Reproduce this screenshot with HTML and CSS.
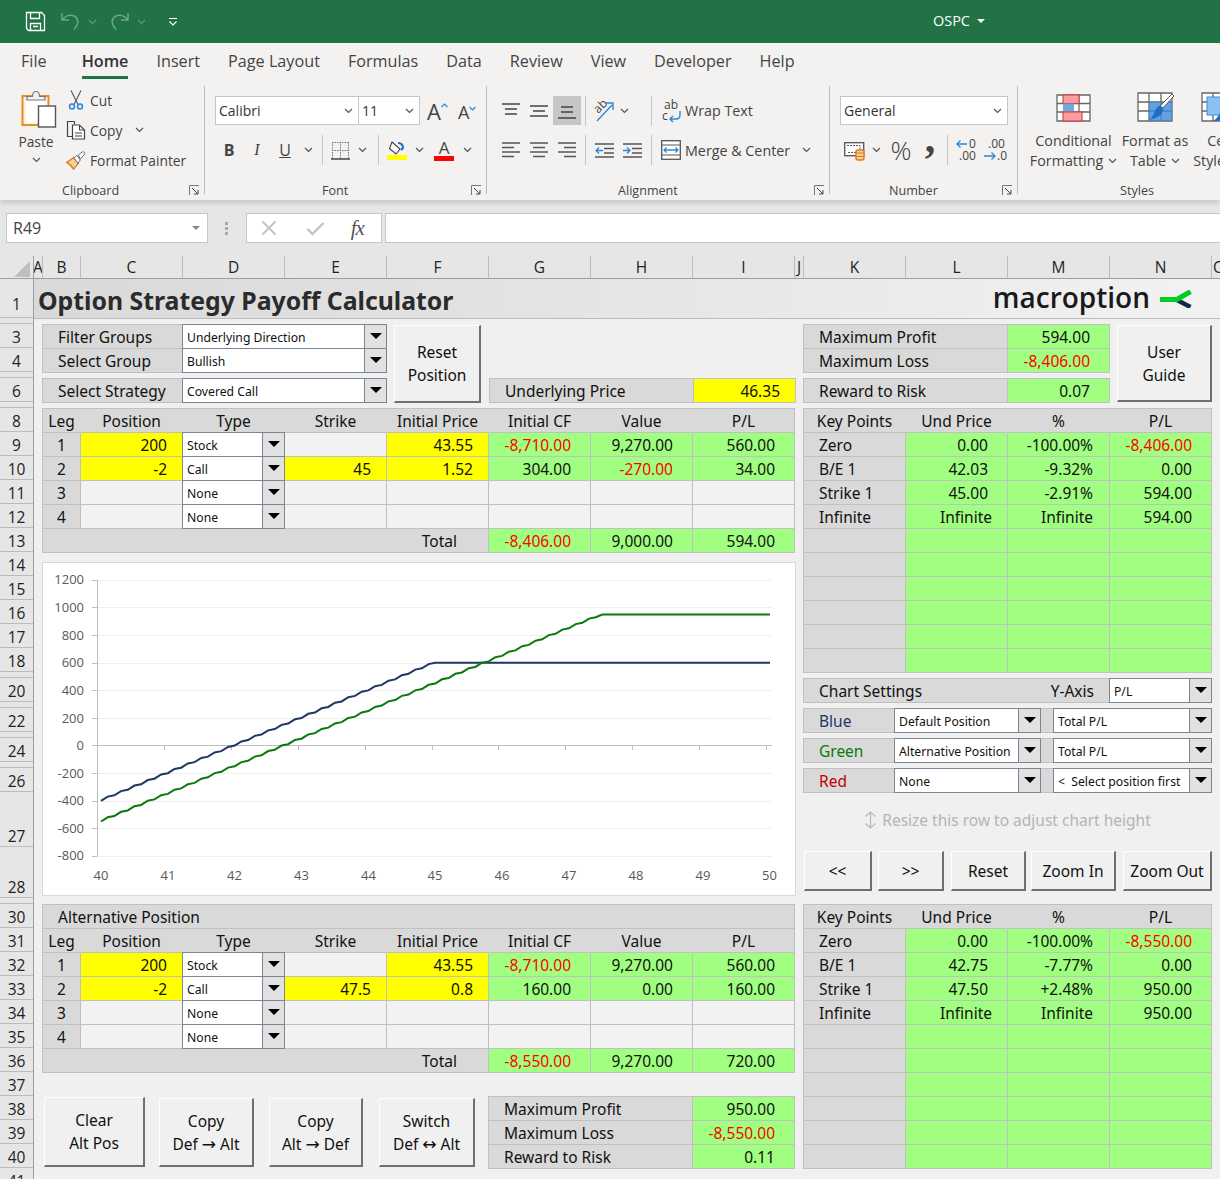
FILE: index.html
```html
<!DOCTYPE html>
<html lang="en">
<head>
<meta charset="utf-8">
<title>OSPC</title>
<link rel="stylesheet" href="styles.css">
</head>
<body>
<svg class="defs" aria-hidden="true">
  <symbol id="chev" viewBox="0 0 9 6"><path d="M1 1l3.500 3.500L8 1" fill="none" stroke="#555" stroke-width="1.200"/></symbol>
  <symbol id="launch" viewBox="0 0 11 11"><path d="M.5 10V.5H10" fill="none" stroke="#777"/><path d="M3 3l6 6M9 5v4H5" fill="none" stroke="#444"/></symbol>
  <symbol id="chevw" viewBox="0 0 9 6"><path d="M1 1l3.500 3.500L8 1" fill="none" stroke="#5f9a7c" stroke-width="1.200"/></symbol>
</svg>
<div class="app">
  <header class="titlebar">
    <svg class="qa-save" width="21" height="21" viewBox="0 0 21 21"><path d="M1.500 1.500h15l3 3v15h-16l-2-2z" fill="none" stroke="#fff" stroke-width="1.300"/><path d="M5.500 1.500v6h9v-6M5.500 19.500v-7h10v7M8 15.500h5" fill="none" stroke="#fff" stroke-width="1.300"/></svg>
    <svg class="qa-undo" width="19" height="21" viewBox="0 0 19 21"><path d="M1 2v7h7M1.500 8.500C5 4 10 3.500 14 5.500c4 2.500 4 8-1 13" fill="none" stroke="#6aa587" stroke-width="1.500"/></svg>
    <svg class="qa-chev" width="9" height="6"><use href="#chevw"/></svg>
    <svg class="qa-redo" width="19" height="21" viewBox="0 0 19 21"><path d="M18 2v7h-7M17.500 8.500C14 4 9 3.500 5 5.500c-4 2.500-4 8 1 13" fill="none" stroke="#6aa587" stroke-width="1.500"/></svg>
    <svg class="qa-chev" width="9" height="6"><use href="#chevw"/></svg>
    <svg class="qa-more" width="10" height="10" viewBox="0 0 10 10"><path d="M1 1.500h8M1.500 4.500L5 8l3.500-3.500" fill="none" stroke="#fff" stroke-width="1.200"/></svg>
    <span class="user">OSPC</span><span class="user-caret"></span>
  </header>

  <nav class="tabs">
    <span class="tab tab-file">File</span><span class="tab active">Home</span><span class="tab">Insert</span><span class="tab">Page Layout</span><span class="tab">Formulas</span><span class="tab">Data</span><span class="tab">Review</span><span class="tab">View</span><span class="tab">Developer</span><span class="tab">Help</span>
  </nav>

  <section class="ribbon">
    <div class="grp g-clip">
      <div class="grp-body">
        <div class="paste">
          <svg class="paste-i" width="36" height="39" viewBox="0 0 36 39"><rect x="1.500" y="6" width="26" height="29" fill="#fdf3e3" stroke="#ed8b21" stroke-width="2"/><rect x="5" y="9" width="19" height="23" fill="#fff"/><path d="M6 10V6.500h5.500c0-3 1-5 3.500-5s3.500 2 3.500 5H24V10z" fill="#f3f2f1" stroke="#777" stroke-width="1.200"/><rect x="17.500" y="16" width="17" height="21" fill="#fff" stroke="#555" stroke-width="1.400"/></svg>
          <span class="paste-t">Paste</span>
          <svg class="paste-c" width="9" height="6"><use href="#chev"/></svg>
        </div>
        <div class="clip-list">
          <div class="clip-row">
            <span class="clip-ic"><svg width="16" height="20" viewBox="0 0 16 20"><path d="M3 .5l7 14M13 .5l-7 14" fill="none" stroke="#555" stroke-width="1.100"/><circle cx="4" cy="16.500" r="2.500" fill="none" stroke="#2b88d8" stroke-width="1.500"/><circle cx="12" cy="16.500" r="2.500" fill="none" stroke="#2b88d8" stroke-width="1.500"/></svg></span>Cut
          </div>
          <div class="clip-row">
            <span class="clip-ic"><svg width="20" height="20" viewBox="0 0 20 20"><path d="M6 16.500H1.500v-15h7M8.500 1.500v3" fill="none" stroke="#444" stroke-width="1.200"/><path d="M6.500 19V5h7l5 5v9z" fill="#fff" stroke="#444" stroke-width="1.200"/><path d="M13.500 5v5h5M9 13h7M9 16h7" fill="none" stroke="#444"/></svg></span>Copy<svg class="clip-chev" width="9" height="6"><use href="#chev"/></svg>
          </div>
          <div class="clip-row">
            <span class="clip-ic"><svg width="21" height="19" viewBox="0 0 21 19"><path d="M.5 11.500L8 6.500l5 6-5 6c-2-3-4-5.500-7.500-7z" fill="#f7cf9a" stroke="#e2781b" stroke-width="1.300"/><path d="M8.500 7l3-3 3.500 5-2.500 3.500z" fill="#fff" stroke="#666"/><path d="M13 4l4-3.500c2-.5 3 1 2.500 2.500L15 8z" fill="#fff" stroke="#666"/></svg></span>Format Painter
          </div>
        </div>
      </div>
      <div class="grp-label lb-clip"><span>Clipboard</span><svg class="launch" width="11" height="11"><use href="#launch"/></svg></div>
    </div>

    <div class="grp g-font">
      <div class="grp-body col">
        <div class="rb-row r1">
          <div class="rcombo w144"><span>Calibri</span><svg width="9" height="6"><use href="#chev"/></svg></div>
          <div class="rcombo w62"><span>11</span><svg width="9" height="6"><use href="#chev"/></svg></div>
          <span class="grow ml7">A<svg width="7" height="5" viewBox="0 0 7 5"><path d="M.5 4L3.500 1l3 3" fill="none" stroke="#2b88d8" stroke-width="1.200"/></svg></span>
          <span class="grow small ml11">A<svg width="7" height="5" viewBox="0 0 7 5"><path d="M.5 1L3.500 4l3-3" fill="none" stroke="#2b88d8" stroke-width="1.200"/></svg></span>
        </div>
        <div class="rb-row r2">
          <span class="ib w28 fb">B</span><span class="ib w28 fi">I</span><span class="ib w28 fu">U</span>
          <span class="ib w18"><svg width="9" height="6"><use href="#chev"/></svg></span>
          <i class="vsep s1"></i>
          <span class="ib w22"><svg width="19" height="19" viewBox="0 0 19 19"><path d="M1 1.500h17M1 9.500h17M9.500 1v17M1.500 1v17M17.500 1v17" fill="none" stroke="#777" stroke-dasharray="1.500 1"/><path d="M0 18h19" stroke="#444" stroke-width="1.500"/></svg></span>
          <span class="ib w22"><svg width="9" height="6"><use href="#chev"/></svg></span>
          <i class="vsep s2"></i>
          <span class="ib w22"><svg width="20" height="21" viewBox="0 0 20 21"><path d="M5 2l8 7-4 5-6.500-5.500z" fill="#fff" stroke="#444" stroke-width="1.100"/><path d="M11 3c3 0 5 1.500 5 5l-2 2" fill="none" stroke="#1b6ec2" stroke-width="2"/><rect y="15" width="20" height="5" fill="#ffff00"/></svg></span>
          <span class="ib w22"><svg width="9" height="6"><use href="#chev"/></svg></span>
          <span class="ib w28 fa">A<b></b></span>
          <span class="ib w18"><svg width="9" height="6"><use href="#chev"/></svg></span>
        </div>
      </div>
      <div class="grp-label lb-font"><span>Font</span><svg class="launch" width="11" height="11"><use href="#launch"/></svg></div>
    </div>

    <div class="grp g-align">
      <div class="grp-body col">
        <div class="rb-row r1 pl10">
          <span class="ib w28 h29"><svg width="20" height="16" viewBox="0 0 20 16"><path d="M1 1h18M4 6h12M4 11h12" stroke="#444" stroke-width="1.400"/></svg></span>
          <span class="ib w28 h29"><svg width="20" height="16" viewBox="0 0 20 16"><path d="M1 3h18M4 8h12M1 13h18" stroke="#444" stroke-width="1.400"/></svg></span>
          <span class="ib w28 h29 on"><svg width="20" height="16" viewBox="0 0 20 16"><path d="M4 4h12M4 9h12M1 15h18" stroke="#444" stroke-width="1.400"/></svg></span>
          <i class="vsep s3"></i>
          <span class="ib w28 h29"><svg class="ovf" width="22" height="24" viewBox="0 0 22 24"><text x="1" y="11" class="svg-ab" transform="rotate(-45 8 8)">ab</text><path d="M4 22L19 6M13 4h7v7" fill="none" stroke="#2b88d8" stroke-width="1.400"/></svg></span>
          <span class="ib w12"><svg width="9" height="6"><use href="#chev"/></svg></span>
          <i class="vsep s4"></i>
          <svg class="ml9 ovf" width="22" height="24" viewBox="0 0 22 24"><text x="3" y="10" class="svg-ab">ab</text><text x="1" y="21" class="svg-ab">c</text><path d="M19 12v4c0 3-2 4-4 4H9M12 17l-3 3 3 3" fill="none" stroke="#2b88d8" stroke-width="1.400"/></svg>
          <span class="rb-text ml2">Wrap Text</span>
        </div>
        <div class="rb-row r2 pl10">
          <span class="ib w28"><svg width="20" height="16" viewBox="0 0 20 16"><path d="M1 1h18M1 5.500h12M1 10h18M1 14.500h12" stroke="#555" stroke-width="1.400"/></svg></span>
          <span class="ib w28"><svg width="20" height="16" viewBox="0 0 20 16"><path d="M1 1h18M4 5.500h12M1 10h18M4 14.500h12" stroke="#555" stroke-width="1.400"/></svg></span>
          <span class="ib w28"><svg width="20" height="16" viewBox="0 0 20 16"><path d="M1 1h18M7 5.500h12M1 10h18M7 14.500h12" stroke="#555" stroke-width="1.400"/></svg></span>
          <i class="vsep s3"></i>
          <span class="ib w28"><svg width="19" height="15" viewBox="0 0 19 15"><path d="M0 1h19M9 5.500h10M9 10h10M0 14h19" stroke="#555" stroke-width="1.300"/><path d="M8 7.500H1M4 4.500l-3 3 3 3" fill="none" stroke="#2b88d8" stroke-width="1.300"/></svg></span>
          <span class="ib w28"><svg width="19" height="15" viewBox="0 0 19 15"><path d="M0 1h19M9 5.500h10M9 10h10M0 14h19" stroke="#555" stroke-width="1.300"/><path d="M0 7.500h7M4 4.500l3 3-3 3" fill="none" stroke="#2b88d8" stroke-width="1.300"/></svg></span>
          <i class="vsep s5"></i>
          <svg class="ml9" width="20" height="20" viewBox="0 0 20 20"><rect x=".7" y=".7" width="18.600" height="18.600" fill="#fff" stroke="#555" stroke-width="1.300"/><path d="M.5 5h19M.5 15h19" stroke="#555"/><path d="M3 10h14M5.500 7.500L3 10l2.500 2.500M14.500 7.500L17 10l-2.500 2.500" fill="none" stroke="#2b88d8" stroke-width="1.300"/></svg>
          <span class="rb-text ml4">Merge &amp; Center</span>
          <svg class="ml12" width="9" height="6"><use href="#chev"/></svg>
        </div>
      </div>
      <div class="grp-label lb-align"><span>Alignment</span><svg class="launch" width="11" height="11"><use href="#launch"/></svg></div>
    </div>

    <div class="grp g-num">
      <div class="grp-body col">
        <div class="rb-row r1 pl10"><div class="rcombo w168"><span>General</span><svg width="9" height="6"><use href="#chev"/></svg></div></div>
        <div class="rb-row r2 pl10">
          <span class="ib w28"><svg width="21" height="21" viewBox="0 0 21 21"><rect x=".7" y="2.700" width="19" height="13" fill="#fff" stroke="#555" stroke-width="1.300"/><path d="M3 5.500h13v7H3" fill="none" stroke="#555" stroke-dasharray="2 1"/><rect x="12" y="10" width="8" height="10" rx="2" fill="#f7cf9a" stroke="#e2781b" stroke-width="1.400"/><path d="M12 13h8M12 16.500h8" stroke="#e2781b"/></svg></span>
          <span class="ib w16"><svg width="9" height="6"><use href="#chev"/></svg></span>
          <span class="ib w34 fpct">%</span>
          <span class="ib w24 fcomma">,</span>
          <i class="vsep s6"></i>
          <span class="ib w27"><svg class="ovf" width="22" height="24" viewBox="0 0 22 24"><text x="13" y="10" class="svg-dec">0</text><text x="3" y="22" class="svg-dec">.00</text><path d="M11 6H1M4.500 2.500L1 6l3.500 3.500" fill="none" stroke="#2b88d8" stroke-width="1.300"/></svg></span>
          <span class="ib w28"><svg class="ovf" width="22" height="24" viewBox="0 0 22 24"><text x="5" y="10" class="svg-dec">.00</text><text x="14" y="22" class="svg-dec">.0</text><path d="M1 18h11M8.500 14.500L12 18l-3.500 3.500" fill="none" stroke="#2b88d8" stroke-width="1.300"/></svg></span>
        </div>
      </div>
      <div class="grp-label lb-num"><span>Number</span><svg class="launch" width="11" height="11"><use href="#launch"/></svg></div>
    </div>

    <div class="grp g-styles">
      <div class="grp-body styles">
        <div class="sty w87">
          <svg width="35" height="28" viewBox="0 0 35 28"><path d="M1 1h33v26H1zM1 9.500h33M1 18h33M12 1v26M23 1v26" fill="#fff" stroke="#666" stroke-width="1.300"/><rect x="7" y="1" width="16" height="8.500" fill="#fc9da4" stroke="#d83b3b" stroke-width="1.100"/><rect x="7" y="9.500" width="11" height="8.500" fill="#6fa8dc"/><rect x="7" y="18" width="19" height="9" fill="#fc9da4" stroke="#d83b3b" stroke-width="1.100"/></svg>
          <span class="sty-t">Conditional</span>
          <span class="sty-t">Formatting<svg class="ml5" width="9" height="6"><use href="#chev"/></svg></span>
        </div>
        <div class="sty w76">
          <svg width="39" height="32" viewBox="0 0 39 32"><path d="M2 1h34v28H2zM2 10h34M2 19h34M13 1v28M25 1v28" fill="#fff" stroke="#666" stroke-width="1.300"/><path d="M13 10h23v19H13z" fill="#3b8ad9" opacity=".8"/><path d="M36 2l2 2-11 12-3-2z" fill="#fff" stroke="#555"/><path d="M24 14l3 3c0 6-5 9-15 11 4-1 5-5 7-9 1-3 3-5 5-5z" fill="#1b6ec2"/></svg>
          <span class="sty-t">Format as</span>
          <span class="sty-t">Table<svg class="ml5" width="9" height="6"><use href="#chev"/></svg></span>
        </div>
        <div class="sty w53">
          <svg width="39" height="32" viewBox="0 0 39 32"><path d="M2 1h34v28H2zM2 10h34M2 19h34M13 1v28" fill="#fff" stroke="#666" stroke-width="1.300"/><rect x="7" y="5" width="29" height="18" fill="#8cc0f0" stroke="#3b8ad9"/><path d="M24 20l3 3c0 4-5 6-15 6 4-1 5-4 7-6 1-2 3-3 5-3z" fill="#1b6ec2"/></svg>
          <span class="sty-t">Cell</span>
          <span class="sty-t">Styles<svg class="ml5" width="9" height="6"><use href="#chev"/></svg></span>
        </div>
      </div>
      <div class="grp-label lb-styles"><span>Styles</span></div>
    </div>
  </section>

  <section class="fbar">
    <div class="namebox"><span>R49</span><i class="nb-caret"></i></div>
    <div class="fdots"><i></i><i></i><i></i></div>
    <div class="fxbox">
      <svg class="fx-x" width="16" height="16" viewBox="0 0 16 16"><path d="M1.500 1.500l13 13M14.500 1.500l-13 13" stroke="#c4c4c4" stroke-width="2"/></svg>
      <svg class="fx-c" width="19" height="15" viewBox="0 0 19 15"><path d="M1.500 8l5 5L17.500 2" fill="none" stroke="#c4c4c4" stroke-width="2.400"/></svg>
      <span class="fx-f">fx</span>
    </div>
    <div class="finput"></div>
  </section>

  <section class="colhead">
    <div class="corner"><i></i></div>
    <div class="ch narrow">A</div><div class="ch cb2">B</div>
    <div class="ch">C</div><div class="ch">D</div><div class="ch">E</div><div class="ch">F</div><div class="ch">G</div><div class="ch">H</div><div class="ch">I</div>
    <div class="ch narrow">J</div>
    <div class="ch">K</div><div class="ch">L</div><div class="ch">M</div><div class="ch">N</div>
    <div class="ch last">O</div>
  </section>

  <section class="sheet">
    <div class="rowhead">
      <div class="rh h40">1</div><div class="rh h6"></div>
      <div class="rh">3</div><div class="rh">4</div><div class="rh h6"></div><div class="rh">6</div><div class="rh h6"></div>
      <div class="rh">8</div><div class="rh">9</div><div class="rh">10</div><div class="rh">11</div><div class="rh">12</div><div class="rh">13</div><div class="rh">14</div><div class="rh">15</div><div class="rh">16</div><div class="rh">17</div><div class="rh">18</div><div class="rh h6"></div>
      <div class="rh">20</div><div class="rh h6"></div><div class="rh">22</div><div class="rh h6"></div><div class="rh">24</div><div class="rh h6"></div><div class="rh">26</div>
      <div class="rh h55">27</div><div class="rh h51">28</div><div class="rh h6"></div>
      <div class="rh">30</div><div class="rh">31</div><div class="rh">32</div><div class="rh">33</div><div class="rh">34</div><div class="rh">35</div><div class="rh">36</div><div class="rh">37</div><div class="rh">38</div><div class="rh">39</div><div class="rh">40</div><div class="rh">41</div>
    </div>

    <div class="main">
      <div class="titlerow">
        <h1>Option Strategy Payoff Calculator</h1>
        <div class="logo"><span>macroption</span>
          <svg width="32" height="18" viewBox="0 0 32 18"><path d="M16 9.500l14.500 7.500" stroke="#12294f" stroke-width="4.500" fill="none"/><path d="M0 9.500h17L30.500 1.500" stroke="#00cc22" stroke-width="5" fill="none"/></svg>
        </div>
      </div>

      <div class="panels">
        <div class="left">
          <div class="top-left">
            <div class="sel-wrap">
              <div class="tb sel">
                <div class="c g lbl">Filter Groups</div>
                <div class="cb"><span>Underlying Direction</span><i></i></div>
                <div class="c g lbl">Select Group</div>
                <div class="cb"><span>Bullish</span><i></i></div>
              </div>
              <div class="tb sel">
                <div class="c g lbl">Select Strategy</div>
                <div class="cb"><span>Covered Call</span><i></i></div>
              </div>
            </div>
            <button class="btn b-reset">Reset<br>Position</button>
            <div class="tb stat price">
              <div class="c g lbl">Underlying Price</div>
              <div class="c y r">46.35</div>
            </div>
          </div>

          <div class="tb legs">
            <div class="c g hd ctr">Leg</div><div class="c g hd ctr">Position</div><div class="c g hd ctr">Type</div><div class="c g hd ctr">Strike</div><div class="c g hd ctr">Initial Price</div><div class="c g hd ctr">Initial CF</div><div class="c g hd ctr">Value</div><div class="c g ctr">P/L</div>

            <div class="c g ctr">1</div><div class="c y r">200</div><div class="cb"><span>Stock</span><i></i></div><div class="c e"></div><div class="c y r">43.55</div><div class="c gn n neg">-8,710.00</div><div class="c gn n">9,270.00</div><div class="c gn n">560.00</div>
            <div class="c g ctr">2</div><div class="c y r">-2</div><div class="cb"><span>Call</span><i></i></div><div class="c y r">45</div><div class="c y r">1.52</div><div class="c gn n">304.00</div><div class="c gn n neg">-270.00</div><div class="c gn n">34.00</div>
            <div class="c g ctr">3</div><div class="c e"></div><div class="cb"><span>None</span><i></i></div><div class="c e"></div><div class="c e"></div><div class="c e"></div><div class="c e"></div><div class="c e"></div>
            <div class="c g ctr">4</div><div class="c e"></div><div class="cb"><span>None</span><i></i></div><div class="c e"></div><div class="c e"></div><div class="c e"></div><div class="c e"></div><div class="c e"></div>
            <div class="c g total">Total</div><div class="c gn n neg">-8,406.00</div><div class="c gn n">9,000.00</div><div class="c gn n">594.00</div>
          </div>

          <div class="chart">
            <svg width="754" height="334" viewBox="42 562 754 334">
              <rect x="42.500" y="562.500" width="753" height="333" fill="#fff" stroke="#d9d9d9"/>
              <path d="M97 580.500H772M97 607.500H772M97 635.500H772M97 663.500H772M97 690.500H772M97 718.500H772M97 773.500H772M97 801.500H772M97 828.500H772M97 856.500H772" stroke="#efefef"/>
              <path d="M97.500 580V856M92 580.500h5M92 607.500h5M92 635.500h5M92 663.500h5M92 690.500h5M92 718.500h5M92 745.500h5M92 773.500h5M92 801.500h5M92 828.500h5M92 856.500h5M97 745.500H772M164.500 745v5M231.500 745v5M298.500 745v5M365.500 745v5M432.500 745v5M498.500 745v5M565.500 745v5M632.500 745v5M699.500 745v5M766.500 745v5" stroke="#bfbfbf" fill="none"/>
              <path class="ln-b" d="M101 800.800
                l6.700-4.200 6.670-1.320 6.700-4.200 6.670-1.320 6.700-4.200 6.670-1.320 6.700-4.200 6.670-1.320 6.700-4.200 6.670-1.320
                l6.700-4.200 6.670-1.320 6.700-4.200 6.670-1.320 6.700-4.200 6.670-1.320 6.700-4.200 6.670-1.320 6.700-4.200 6.670-1.320
                l6.700-4.200 6.670-1.320 6.700-4.200 6.670-1.320 6.700-4.200 6.670-1.320 6.700-4.200 6.670-1.320 6.700-4.200 6.670-1.320
                l6.700-4.200 6.670-1.320 6.700-4.200 6.670-1.320 6.700-4.200 6.670-1.320 6.700-4.200 6.670-1.320 6.700-4.200 6.670-1.320
                l6.700-4.200 6.670-1.320 6.700-4.200 6.670-1.320 6.700-4.200 6.670-1.320 6.700-4.200 6.670-1.320 6.700-4.200 6.670-1.320
                H770"/>
              <path class="ln-g" d="M101 821.500
                l6.700-4.200 6.670-1.320 6.700-4.200 6.670-1.320 6.700-4.200 6.670-1.320 6.700-4.200 6.670-1.320 6.700-4.200 6.670-1.320
                l6.700-4.200 6.670-1.320 6.700-4.200 6.670-1.320 6.700-4.200 6.670-1.320 6.700-4.200 6.670-1.320 6.700-4.200 6.670-1.320
                l6.700-4.200 6.670-1.320 6.700-4.200 6.670-1.320 6.700-4.200 6.670-1.320 6.700-4.200 6.670-1.320 6.700-4.200 6.670-1.320
                l6.700-4.200 6.670-1.320 6.700-4.200 6.670-1.320 6.700-4.200 6.670-1.320 6.700-4.200 6.670-1.320 6.700-4.200 6.670-1.320
                l6.700-4.200 6.670-1.320 6.700-4.200 6.670-1.320 6.700-4.200 6.670-1.320 6.700-4.200 6.670-1.320 6.700-4.200 6.670-1.320
                l6.700-4.200 6.670-1.320 6.700-4.200 6.670-1.320 6.700-4.200 6.670-1.320 6.700-4.200 6.670-1.320 6.700-4.200 6.670-1.320
                l6.700-4.200 6.670-1.320 6.700-4.200 6.670-1.320 6.700-4.200 6.670-1.320 6.700-4.200 6.670-1.320 6.700-4.200 6.670-1.320
                l6.700-4.200 6.670-1.320 6.700-4.200 6.670-1.320 6.700-2.760
                H770"/>
              <g class="ax-y">
                <text x="84" y="584">1200</text><text x="84" y="612">1000</text><text x="84" y="640">800</text><text x="84" y="667">600</text><text x="84" y="695">400</text><text x="84" y="723">200</text><text x="84" y="750">0</text><text x="84" y="778">-200</text><text x="84" y="805">-400</text><text x="84" y="833">-600</text><text x="84" y="860">-800</text>
              </g>
              <g class="ax-x">
                <text x="101" y="880">40</text><text x="168" y="880">41</text><text x="234.500" y="880">42</text><text x="301.500" y="880">43</text><text x="368.500" y="880">44</text><text x="435" y="880">45</text><text x="502" y="880">46</text><text x="569" y="880">47</text><text x="636" y="880">48</text><text x="703" y="880">49</text><text x="769.500" y="880">50</text>
              </g>
            </svg>
          </div>

          <div class="tb legs">
            <div class="c g lbl span-all">Alternative Position</div>
            <div class="c g hd ctr">Leg</div><div class="c g hd ctr">Position</div><div class="c g hd ctr">Type</div><div class="c g hd ctr">Strike</div><div class="c g hd ctr">Initial Price</div><div class="c g hd ctr">Initial CF</div><div class="c g hd ctr">Value</div><div class="c g ctr">P/L</div>
            <div class="c g ctr">1</div><div class="c y r">200</div><div class="cb"><span>Stock</span><i></i></div><div class="c e"></div><div class="c y r">43.55</div><div class="c gn n neg">-8,710.00</div><div class="c gn n">9,270.00</div><div class="c gn n">560.00</div>
            <div class="c g ctr">2</div><div class="c y r">-2</div><div class="cb"><span>Call</span><i></i></div><div class="c y r">47.5</div><div class="c y r">0.8</div><div class="c gn n">160.00</div><div class="c gn n">0.00</div><div class="c gn n">160.00</div>
            <div class="c g ctr">3</div><div class="c e"></div><div class="cb"><span>None</span><i></i></div><div class="c e"></div><div class="c e"></div><div class="c e"></div><div class="c e"></div><div class="c e"></div>
            <div class="c g ctr">4</div><div class="c e"></div><div class="cb"><span>None</span><i></i></div><div class="c e"></div><div class="c e"></div><div class="c e"></div><div class="c e"></div><div class="c e"></div>
            <div class="c g total">Total</div><div class="c gn n neg">-8,550.00</div><div class="c gn n">9,270.00</div><div class="c gn n">720.00</div>
          </div>

          <div class="bottom">
            <button class="btn b-clear">Clear<br>Alt Pos</button>
            <button class="btn b-c1">Copy<br>Def <span class="arr">→</span> Alt</button>
            <button class="btn b-c2">Copy<br>Alt <span class="arr">→</span> Def</button>
            <button class="btn b-sw">Switch<br>Def <span class="arr">↔</span> Alt</button>
            <div class="tb stat">
              <div class="c g lbl">Maximum Profit</div><div class="c gn n">950.00</div>
              <div class="c g lbl">Maximum Loss</div><div class="c gn n neg">-8,550.00</div>
              <div class="c g lbl">Reward to Risk</div><div class="c gn n">0.11</div>
            </div>
          </div>
        </div>

        <div class="right">
          <div class="top-right">
            <div class="sel-wrap">
              <div class="tb stat">
                <div class="c g lbl">Maximum Profit</div><div class="c gn n">594.00</div>
                <div class="c g lbl">Maximum Loss</div><div class="c gn n neg">-8,406.00</div>
              </div>
              <div class="tb stat">
                <div class="c g lbl">Reward to Risk</div><div class="c gn n">0.07</div>
              </div>
            </div>
            <button class="btn b-guide">User<br>Guide</button>
          </div>

          <div class="tb keys">
            <div class="c g hd ctr">Key Points</div><div class="c g hd ctr">Und Price</div><div class="c g hd ctr">%</div><div class="c g ctr">P/L</div>
            <div class="c g lbl">Zero</div><div class="c gn n">0.00</div><div class="c gn p">-100.00%</div><div class="c gn n neg">-8,406.00</div>
            <div class="c g lbl">B/E 1</div><div class="c gn n">42.03</div><div class="c gn p">-9.32%</div><div class="c gn n">0.00</div>
            <div class="c g lbl">Strike 1</div><div class="c gn n">45.00</div><div class="c gn p">-2.91%</div><div class="c gn n">594.00</div>
            <div class="c g lbl">Infinite</div><div class="c gn r">Infinite</div><div class="c gn p">Infinite</div><div class="c gn n">594.00</div>
            <div class="c g"></div><div class="c gn"></div><div class="c gn"></div><div class="c gn"></div>
            <div class="c g"></div><div class="c gn"></div><div class="c gn"></div><div class="c gn"></div>
            <div class="c g"></div><div class="c gn"></div><div class="c gn"></div><div class="c gn"></div>
            <div class="c g"></div><div class="c gn"></div><div class="c gn"></div><div class="c gn"></div>
            <div class="c g"></div><div class="c gn"></div><div class="c gn"></div><div class="c gn"></div>
            <div class="c g"></div><div class="c gn"></div><div class="c gn"></div><div class="c gn"></div>
          </div>

          <div class="settings">
            <div class="tb set-head">
              <div class="c g lbl sh-l"><span>Chart Settings</span><span class="yaxis">Y-Axis</span></div>
              <div class="cb"><span>P/L</span><i></i></div>
            </div>
            <div class="tb set-row">
              <div class="c g lbl t-blue">Blue</div>
              <div class="cb"><span>Default Position</span><i></i></div><div class="c g"></div>
              <div class="cb"><span>Total P/L</span><i></i></div>
            </div>
            <div class="tb set-row">
              <div class="c g lbl t-green">Green</div>
              <div class="cb"><span>Alternative Position</span><i></i></div><div class="c g"></div>
              <div class="cb"><span>Total P/L</span><i></i></div>
            </div>
            <div class="tb set-row">
              <div class="c g lbl t-red">Red</div>
              <div class="cb"><span>None</span><i></i></div><div class="c g"></div>
              <div class="cb"><span>&lt;&nbsp; Select position first</span><i></i></div>
            </div>
          </div>

          <div class="hint">
            <svg width="13" height="18" viewBox="0 0 13 18"><path d="M6.500 1v16M1.500 5.500l5-4.500 5 4.500M1.500 12.500l5 4.500 5-4.500" fill="none" stroke="#b8b8b8" stroke-width="1.200"/></svg>
            <span>Resize this row to adjust chart height</span>
          </div>

          <div class="zoomrow">
            <button class="btn z1">&lt;&lt;</button><button class="btn z2">&gt;&gt;</button><button class="btn z3">Reset</button><button class="btn z4">Zoom In</button><button class="btn z5">Zoom Out</button>
          </div>

          <div class="tb keys">
            <div class="c g hd ctr">Key Points</div><div class="c g hd ctr">Und Price</div><div class="c g hd ctr">%</div><div class="c g ctr">P/L</div>
            <div class="c g lbl">Zero</div><div class="c gn n">0.00</div><div class="c gn p">-100.00%</div><div class="c gn n neg">-8,550.00</div>
            <div class="c g lbl">B/E 1</div><div class="c gn n">42.75</div><div class="c gn p">-7.77%</div><div class="c gn n">0.00</div>
            <div class="c g lbl">Strike 1</div><div class="c gn n">47.50</div><div class="c gn p">+2.48%</div><div class="c gn n">950.00</div>
            <div class="c g lbl">Infinite</div><div class="c gn r">Infinite</div><div class="c gn p">Infinite</div><div class="c gn n">950.00</div>
            <div class="c g"></div><div class="c gn"></div><div class="c gn"></div><div class="c gn"></div>
            <div class="c g"></div><div class="c gn"></div><div class="c gn"></div><div class="c gn"></div>
            <div class="c g"></div><div class="c gn"></div><div class="c gn"></div><div class="c gn"></div>
            <div class="c g"></div><div class="c gn"></div><div class="c gn"></div><div class="c gn"></div>
            <div class="c g"></div><div class="c gn"></div><div class="c gn"></div><div class="c gn"></div>
            <div class="c g"></div><div class="c gn"></div><div class="c gn"></div><div class="c gn"></div>
          </div>
        </div>
      </div>
    </div>
  </section>
</div>
</body>
</html>
```
FILE: styles.css
```css
:root {
  --line: #c0c0c0;
  --cbline: #7b8694;
  --gray: #d9d9d9;
  --panel: #f0f0f0;
  --green: #a0ff80;
  --ink: #111;
  --rib: #444;
}
* { box-sizing: border-box; }
html, body { margin: 0; padding: 0; }
body { font-family: "Noto Sans", sans-serif; color: var(--ink); }
.defs { display: none; }
.ovf { overflow: visible; }
.app { width: 1220px; height: 1179px; overflow: hidden; background: var(--panel); }

/* title bar */
.titlebar { height: 43px; background: #217346; display: flex; align-items: center; padding-left: 25px; color: #fff; }
.qa-save { margin-top: -1px; }
.qa-undo { margin-left: 15px; margin-top: -1px; }
.qa-chev { margin-left: 8px; }
.qa-redo { margin-left: 13px; margin-top: -1px; }
.qa-more { margin-left: 22px; }
.user { margin-left: auto; font-family: "Open Sans", sans-serif; font-size: 14.500px; margin-top: -3px; }
.user-caret { width: 0; height: 0; border: 4px solid transparent; border-top: 4px solid #fff; border-bottom: 0; margin: -2px 235px 0 7px; }

/* tabs */
.tabs { height: 37px; background: #f3f2f1; display: flex; gap: 28px; padding-left: 21px; font-family: "Open Sans", sans-serif; font-size: 16.200px; color: #444; align-items: flex-start; }
.tab { line-height: 36px; height: 37px; position: relative; }
.tab-file { margin-right: 7px; }
.tab.active { font-weight: 600; color: #333; border-bottom: 3px solid #217346; height: 36px; }

/* ribbon */
.ribbon { height: 120px; background: #f3f2f1; display: flex; font-family: "Open Sans", sans-serif; font-size: 13.800px; color: var(--rib); box-shadow: 0 3px 5px rgba(0,0,0,.13); position: relative; z-index: 1; }
.grp { display: flex; flex-direction: column; position: relative; flex: none; }
.grp::after { content: ""; position: absolute; right: 0; top: 6px; bottom: 6px; width: 1px; background: #bdbdbd; }
.g-clip { width: 205px; }
.g-font { width: 282px; }
.g-align { width: 343px; }
.g-num { width: 188px; }
.g-styles { width: 244px; }
.g-styles::after { display: none; }
.grp-body { height: 100px; display: flex; }
.grp-body.col { flex-direction: column; padding-top: 16px; }
.grp-label { height: 20px; display: flex; align-items: center; font-size: 12.600px; margin-top: 0; }
.launch { margin-left: auto; margin-right: 5px; }
.lb-clip { padding-left: 62px; }
.lb-font { padding-left: 117px; }
.lb-align { padding-left: 131px; }
.lb-num { padding-left: 59px; }
.lb-styles { padding-left: 102px; }

.paste { width: 66px; padding-left: 6px; display: flex; flex-direction: column; align-items: center; padding-top: 10px; }
.paste-i { margin-left: 6px; }
.paste-t { margin-top: 3px; line-height: 20px; }
.paste-c { margin-top: 5px; }
.clip-list { display: flex; flex-direction: column; padding-top: 5px; }
.clip-row { height: 30px; display: flex; align-items: center; white-space: nowrap; }
.clip-ic { width: 24px; display: flex; justify-content: center; }
.clip-ic svg { margin-right: 4px; }
.clip-chev { margin-left: 13px; }

.rb-row { display: flex; align-items: center; white-space: nowrap; }
.rb-row.r1 { height: 29px; }
.rb-row.r2 { height: 30px; margin-top: 10px; }
.g-font .rb-row { padding-left: 10px; }
.pl10 { padding-left: 10px; }
.rcombo { height: 29px; background: #fff; border: 1px solid #c6c6c6; display: flex; align-items: center; justify-content: space-between; padding: 0 5px 0 3px; color: #333; font-size: 14px; }
.w144 { width: 144px; }
.w62 { width: 62px; margin-left: -1px; }
.w168 { width: 168px; }
.grow { font-size: 22px; line-height: 1; display: inline-flex; color: #444; }
.grow svg { margin-top: 3px; margin-left: 0; }
.grow.small { font-size: 18px; margin-top: 3px; }
.ml7 { margin-left: 7px; }
.ml11 { margin-left: 10px; }
.ml9 { margin-left: 9px; }
.ml2 { margin-left: 2px; }
.ml4 { margin-left: 4px; }
.ml5 { margin-left: 5px; }
.ml12 { margin-left: 12px; }
.ib { display: inline-flex; align-items: center; justify-content: center; height: 30px; flex: none; }
.h29 { height: 29px; }
.ib.on { background: #c6c6c6; }
.w12 { width: 12px; }
.w16 { width: 16px; }
.w18 { width: 18px; }
.w22 { width: 22px; }
.w24 { width: 24px; }
.w27 { width: 27px; }
.w28 { width: 28px; }
.w34 { width: 34px; }
.fb { font-weight: 700; font-size: 16px; }
.fi { font-style: italic; font-size: 16px; font-family: "Liberation Serif", serif; }
.fu { font-size: 16px; text-decoration: underline; }
.fa { font-size: 17px; flex-direction: column; line-height: 16px; }
.fa b { display: block; width: 20px; height: 5px; background: #f00; }
.fpct { font-size: 26px; font-weight: 300; }
.fcomma { font-size: 42px; font-weight: 700; line-height: 14px; padding-bottom: 24px; font-family: "Liberation Serif", serif; overflow: hidden; height: 30px; }
.vsep { display: block; width: 1px; background: #c6c6c6; height: 30px; flex: none; }
.s1 { margin: 0 6px 0 5px; }
.s2 { margin: 0 7px 0 5px; }
.s3 { margin: 0 4px; }
.s4 { margin-left: 21px; }
.s5 { margin-left: 5px; }
.s6 { margin: 0 5px; }
.svg-ab { font-size: 12px; fill: #444; font-family: "Open Sans", sans-serif; }
.svg-dec { font-size: 12px; fill: #444; font-family: "Open Sans", sans-serif; }
.rb-text { font-size: 14.300px; }
.styles { padding-top: 12px; padding-left: 12px; }
.sty { display: flex; flex-direction: column; align-items: center; flex: none; font-size: 14.300px; }
.sty > svg { height: 32px; margin-bottom: 7px; }
.sty-t { line-height: 20px; white-space: nowrap; display: flex; align-items: center; }
.w87 { width: 87px; }
.w76 { width: 76px; }
.w53 { width: 53px; }

/* formula bar */
.fbar { height: 56px; background: #e6e6e6; display: flex; padding-top: 13px; padding-left: 6px; }
.namebox { width: 203px; height: 30px; background: #fff; border: 1px solid #c6c6c6; display: flex; align-items: center; justify-content: space-between; padding: 0 7px 0 6px; color: #444; font-family: "Open Sans", sans-serif; font-size: 16px; }
.nb-caret { width: 0; height: 0; border: 4px solid transparent; border-top: 4px solid #888; border-bottom: 0; }
.fdots { width: 37px; height: 30px; display: flex; flex-direction: column; align-items: center; justify-content: center; gap: 2px; margin-right: 1px; }
.fdots i { display: block; width: 3px; height: 3px; background: #a8a8a8; }
.fxbox { width: 137px; height: 30px; background: #fff; border: 1px solid #c6c6c6; display: flex; align-items: center; padding-left: 14px; }
.fx-c { margin-left: 29px; }
.fx-f { margin-left: 26px; font-family: "Liberation Serif", serif; font-style: italic; font-size: 21px; color: #555; letter-spacing: -1px; }
.finput { width: 840px; height: 30px; margin-left: 3px; background: #fff; border: 1px solid #c6c6c6; border-right: 0; }

/* column header */
.colhead { height: 23px; background: #e6e6e6; display: grid; grid-template-columns: 34px 9px 38px repeat(7, 102px) 9px repeat(4, 102px) 8px; border-bottom: 1px solid #9e9e9e; font-family: "Open Sans", sans-serif; font-size: 15.500px; color: #222; }
.corner { border-right: 1px solid #9e9e9e; position: relative; }
.corner i { position: absolute; right: 3px; bottom: 1px; width: 0; height: 0; border-left: 16px solid transparent; border-bottom: 16px solid #bfbfbf; }
.ch { border-right: 1px solid #bcbcbc; display: flex; align-items: center; justify-content: center; line-height: 22px; overflow: hidden; }
.ch.last { border-right: 0; justify-content: flex-start; padding-left: 1px; }

/* sheet */
.sheet { display: flex; height: 901px; overflow: hidden; }
.rowhead { width: 34px; flex: none; background: #e6e6e6; border-right: 1px solid #9e9e9e; font-family: "Open Sans", sans-serif; font-size: 15.500px; color: #222; }
.rh { height: 24px; border-bottom: 1px solid #bcbcbc; display: flex; align-items: flex-end; justify-content: center; line-height: 20px; overflow: hidden; }
.rh.h6 { height: 6px; }
.rh.h40 { height: 39px; padding-bottom: 3px; }
.rh.h55 { height: 55px; }
.rh.h51 { height: 51px; }

.main { flex: 1; min-width: 0; }
.titlerow { height: 40px; border-bottom: 1px solid #bcbcbc; background: linear-gradient(to right, #d9d9d9, #f2f2f2); display: flex; align-items: center; justify-content: space-between; padding: 0 28px 0 4px; }
h1 { margin: 2px 0 0; font-size: 24.800px; font-weight: 700; color: #2b2b2b; white-space: nowrap; }
.logo { display: flex; align-items: center; font-family: "Open Sans", sans-serif; font-size: 28px; font-weight: 600; color: #1a1a1a; gap: 10px; margin-top: -4px; }
.logo svg { margin-top: 5px; }

.panels { display: flex; padding: 5px 0 0 8px; gap: 8px; }
.left { width: 753px; flex: none; display: flex; flex-direction: column; }
.right { width: 409px; flex: none; display: flex; flex-direction: column; }

.tb { display: grid; grid-auto-rows: 24px; border-top: 1px solid var(--line); border-left: 1px solid var(--line); font-size: 15.500px; align-self: flex-start; }
.c { border-right: 1px solid var(--line); border-bottom: 1px solid var(--line); display: flex; align-items: center; white-space: nowrap; overflow: hidden; }
.g { background: var(--gray); }
.hd { border-right-color: var(--gray); }
.gn { background: var(--green); }
.y { background: #ffff00; }
.e { background: #f2f2f2; }
.ctr { justify-content: center; }
.r { justify-content: flex-end; padding-right: 15px; }
.n { justify-content: flex-end; padding-right: 19px; }
.p { justify-content: flex-end; padding-right: 16px; }
.neg { color: #ff0000; }
.lbl { padding-left: 15px; }
.total { grid-column: 1 / 6; justify-content: flex-end; padding-right: 31px; }
.span-all { grid-column: 1 / -1; }

.cb { background: #fff; border: 1px solid var(--cbline); margin: -1px 0 0 -1px; display: flex; align-items: stretch; justify-content: space-between; font-size: 12.200px; overflow: hidden; white-space: nowrap; }
.cb span { padding-left: 4px; align-self: center; padding-top: 1px; }
.cb i { display: flex; flex: none; width: 22px; background: #e1e1e1; border-left: 1px solid var(--cbline); align-items: center; justify-content: center; padding-bottom: 2px; }
.cb i::after { content: ""; width: 0; height: 0; border-left: 6px solid transparent; border-right: 6px solid transparent; border-top: 6px solid #000; }

.btn { font: inherit; font-size: 15.500px; color: var(--ink); line-height: 23px; background: var(--panel); border: 0; border-top: 1px solid #fff; border-left: 1px solid #fff; border-right: 2px solid #6f6f6f; border-bottom: 2px solid #6f6f6f; padding: 1px 0 0; flex: none; }
.arr { font-family: "DejaVu Sans", sans-serif; font-size: 17px; line-height: 1; }

.top-left { display: flex; height: 79px; }
.sel-wrap { display: flex; flex-direction: column; gap: 5px; }
.sel { grid-template-columns: 140px 204px; width: 345px; }
.b-reset { width: 87px; height: 78px; margin: 1px 0 0 7px; }
.stat { grid-template-columns: 204px 102px; width: 307px; }
.price { margin: auto 0 0 8px; align-self: flex-end; }
.legs { grid-template-columns: 38px repeat(7, 102px); margin-top: 5px; width: 753px; }
.chart { height: 334px; margin-top: 9px; width: 754px; }
.chart svg { display: block; }
.chart + .legs { margin-top: 8px; }
.ln-b { fill: none; stroke: #1f3864; stroke-width: 2; }
.ln-g { fill: none; stroke: #0b7a0b; stroke-width: 2; }
.ax-y text, .ax-x text { font-family: "Open Sans", sans-serif; font-size: 13px; fill: #595959; }
.ax-y text { text-anchor: end; }
.ax-x text { text-anchor: middle; }

.bottom { display: flex; margin-top: 23px; padding-left: 2px; }
.b-clear { width: 101px; height: 70px; margin-top: 1px; }
.b-c1 { width: 95px; height: 69px; margin: 2px 0 0 14px; }
.b-c2 { width: 94px; height: 69px; margin: 2px 0 0 15px; }
.b-sw { width: 96px; height: 69px; margin: 2px 0 0 16px; }
.bottom .stat { margin-left: 13px; }

.top-right { display: flex; height: 79px; }
.b-guide { width: 95px; height: 77px; margin: 1px 0 0 7px; padding-top: 2px; }
.keys { grid-template-columns: repeat(4, 102px); margin-top: 5px; width: 409px; }
.settings { display: flex; flex-direction: column; gap: 5px; margin-top: 5px; }
.set-head { grid-template-columns: 306px 102px; width: 409px; }
.sh-l { justify-content: space-between; padding-right: 15px; }
.set-row { grid-template-columns: 91px 146px 13px 158px; width: 409px; }
.set-row .c.g:not(.lbl) { border-right-color: var(--gray); }
.t-blue { color: #1f3864; }
.t-green { color: #0b7a0b; }
.t-red { color: #c00000; }
.hint { height: 58px; display: flex; align-items: center; justify-content: center; gap: 5px; color: #b4b4b4; font-size: 15.500px; padding-bottom: 4px; }
.zoomrow { display: flex; height: 40px; padding-left: 1px; }
.zoomrow .btn { height: 40px; padding-top: 2px; }
.z1 { width: 68px; }
.z2 { width: 66px; margin-left: 6px; }
.z3 { width: 75px; margin-left: 7px; }
.z4 { width: 85px; margin-left: 5px; }
.z5 { width: 89px; margin-left: 7px; }
.zoomrow + .keys { margin-top: 13px; }
```
